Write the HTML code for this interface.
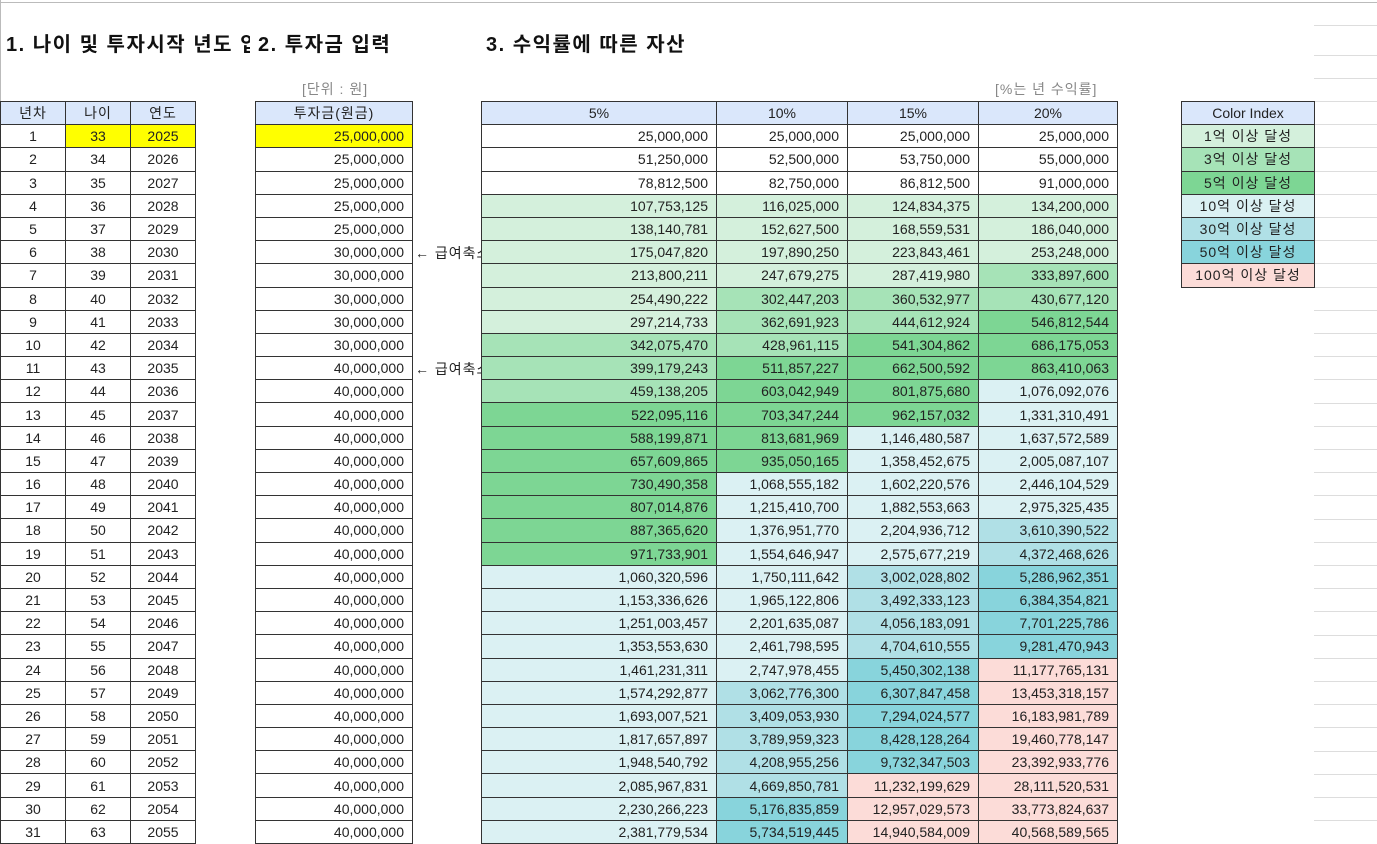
<!DOCTYPE html><html><head><meta charset="utf-8"><style>
body{margin:0;width:1377px;height:836px;overflow:hidden;background:#fff;font-family:"Liberation Sans","Noto Sans CJK KR",sans-serif;position:relative}
.t{position:absolute;font-weight:bold;font-size:20px;letter-spacing:1.5px;top:28px;white-space:nowrap;color:#111}
.g{position:absolute;font-size:14px;letter-spacing:1px;color:#888;top:79px}
table{position:absolute;top:101px;left:0;border-collapse:collapse;table-layout:fixed;font-size:14px;color:#222}
td{border:1px solid #333;height:22.2px;padding:0 8px;text-align:right;white-space:nowrap;overflow:hidden;line-height:20px}
td.s2{border:none}
.c{text-align:center}
.ko{letter-spacing:1px}
.h td{background:#dae7fb;text-align:center}
.h td.s2{background:none}
.y{background:#ffff00}
.a{background:#d4f0dc}.b{background:#a6e3b7}.d{background:#7dd694}.e{background:#dbf1f3}.f{background:#b0e0e6}.k{background:#88d4dc}.m{background:#fcdcd8}
.top{position:absolute;top:2px;left:0;width:1377px;height:1px;background:#bbb}
.lft{position:absolute;top:0;left:0;width:1px;height:101px;background:#bbb}
.rl{position:absolute;left:1314px;width:63px;height:1px;background:#ddd}
.clip{position:absolute;left:412px;top:242px;width:69px;height:140px;overflow:hidden;font-size:14px;color:#222}
</style></head><body>
<div class="top"></div><div class="lft"></div>
<div class="rl" style="top:25px"></div><div class="rl" style="top:55px"></div><div class="rl" style="top:78px"></div>
<div class="rl" style="top:101px"></div><div class="rl" style="top:124px"></div><div class="rl" style="top:147px"></div><div class="rl" style="top:171px"></div><div class="rl" style="top:194px"></div><div class="rl" style="top:217px"></div><div class="rl" style="top:240px"></div><div class="rl" style="top:263px"></div><div class="rl" style="top:287px"></div><div class="rl" style="top:310px"></div><div class="rl" style="top:333px"></div><div class="rl" style="top:356px"></div><div class="rl" style="top:379px"></div><div class="rl" style="top:403px"></div><div class="rl" style="top:426px"></div><div class="rl" style="top:449px"></div><div class="rl" style="top:472px"></div><div class="rl" style="top:495px"></div><div class="rl" style="top:519px"></div><div class="rl" style="top:542px"></div><div class="rl" style="top:565px"></div><div class="rl" style="top:588px"></div><div class="rl" style="top:611px"></div><div class="rl" style="top:635px"></div><div class="rl" style="top:658px"></div><div class="rl" style="top:681px"></div><div class="rl" style="top:704px"></div><div class="rl" style="top:727px"></div><div class="rl" style="top:751px"></div><div class="rl" style="top:774px"></div><div class="rl" style="top:797px"></div><div class="rl" style="top:820px"></div>
<div class="t" style="left:6px;width:244px;overflow:hidden">1. 나이 및 투자시작 년도 입력</div>
<div class="t" style="left:258px">2. 투자금 입력</div>
<div class="t" style="left:486px">3. 수익률에 따른 자산</div>
<div class="g" style="left:302px">[단위 : 원]</div>
<div class="g" style="left:995px">[%는 년 수익률]</div>
<div class="clip"><div style="position:absolute;top:1px;left:3px;white-space:nowrap;letter-spacing:1px">← 급여축소</div><div style="position:absolute;top:117px;left:3px;white-space:nowrap;letter-spacing:1px">← 급여축소</div></div>
<table>
<colgroup><col style="width:65px"><col style="width:65px"><col style="width:65px"><col style="width:60px"><col style="width:157px"><col style="width:69px"><col style="width:235px"><col style="width:131px"><col style="width:131px"><col style="width:139px"><col style="width:64px"><col style="width:133px"></colgroup>
<tr class="h"><td class="ko">년차</td><td class="ko">나이</td><td class="ko">연도</td><td class="s2"></td><td class="ko">투자금(원금)</td><td class="s2"></td><td>5%</td><td>10%</td><td>15%</td><td>20%</td><td class="s2"></td><td>Color Index</td></tr>
<tr><td class="c">1</td><td class="c y">33</td><td class="c y">2025</td><td class="s2"></td><td class="y">25,000,000</td><td class="s2"></td><td>25,000,000</td><td>25,000,000</td><td>25,000,000</td><td>25,000,000</td><td class="s2"></td><td class="c a ko">1억 이상 달성</td></tr>
<tr><td class="c">2</td><td class="c">34</td><td class="c">2026</td><td class="s2"></td><td>25,000,000</td><td class="s2"></td><td>51,250,000</td><td>52,500,000</td><td>53,750,000</td><td>55,000,000</td><td class="s2"></td><td class="c b ko">3억 이상 달성</td></tr>
<tr><td class="c">3</td><td class="c">35</td><td class="c">2027</td><td class="s2"></td><td>25,000,000</td><td class="s2"></td><td>78,812,500</td><td>82,750,000</td><td>86,812,500</td><td>91,000,000</td><td class="s2"></td><td class="c d ko">5억 이상 달성</td></tr>
<tr><td class="c">4</td><td class="c">36</td><td class="c">2028</td><td class="s2"></td><td>25,000,000</td><td class="s2"></td><td class="a">107,753,125</td><td class="a">116,025,000</td><td class="a">124,834,375</td><td class="a">134,200,000</td><td class="s2"></td><td class="c e ko">10억 이상 달성</td></tr>
<tr><td class="c">5</td><td class="c">37</td><td class="c">2029</td><td class="s2"></td><td>25,000,000</td><td class="s2"></td><td class="a">138,140,781</td><td class="a">152,627,500</td><td class="a">168,559,531</td><td class="a">186,040,000</td><td class="s2"></td><td class="c f ko">30억 이상 달성</td></tr>
<tr><td class="c">6</td><td class="c">38</td><td class="c">2030</td><td class="s2"></td><td>30,000,000</td><td class="s2"></td><td class="a">175,047,820</td><td class="a">197,890,250</td><td class="a">223,843,461</td><td class="a">253,248,000</td><td class="s2"></td><td class="c k ko">50억 이상 달성</td></tr>
<tr><td class="c">7</td><td class="c">39</td><td class="c">2031</td><td class="s2"></td><td>30,000,000</td><td class="s2"></td><td class="a">213,800,211</td><td class="a">247,679,275</td><td class="a">287,419,980</td><td class="b">333,897,600</td><td class="s2"></td><td class="c m ko">100억 이상 달성</td></tr>
<tr><td class="c">8</td><td class="c">40</td><td class="c">2032</td><td class="s2"></td><td>30,000,000</td><td class="s2"></td><td class="a">254,490,222</td><td class="b">302,447,203</td><td class="b">360,532,977</td><td class="b">430,677,120</td></tr>
<tr><td class="c">9</td><td class="c">41</td><td class="c">2033</td><td class="s2"></td><td>30,000,000</td><td class="s2"></td><td class="a">297,214,733</td><td class="b">362,691,923</td><td class="b">444,612,924</td><td class="d">546,812,544</td></tr>
<tr><td class="c">10</td><td class="c">42</td><td class="c">2034</td><td class="s2"></td><td>30,000,000</td><td class="s2"></td><td class="b">342,075,470</td><td class="b">428,961,115</td><td class="d">541,304,862</td><td class="d">686,175,053</td></tr>
<tr><td class="c">11</td><td class="c">43</td><td class="c">2035</td><td class="s2"></td><td>40,000,000</td><td class="s2"></td><td class="b">399,179,243</td><td class="d">511,857,227</td><td class="d">662,500,592</td><td class="d">863,410,063</td></tr>
<tr><td class="c">12</td><td class="c">44</td><td class="c">2036</td><td class="s2"></td><td>40,000,000</td><td class="s2"></td><td class="b">459,138,205</td><td class="d">603,042,949</td><td class="d">801,875,680</td><td class="e">1,076,092,076</td></tr>
<tr><td class="c">13</td><td class="c">45</td><td class="c">2037</td><td class="s2"></td><td>40,000,000</td><td class="s2"></td><td class="d">522,095,116</td><td class="d">703,347,244</td><td class="d">962,157,032</td><td class="e">1,331,310,491</td></tr>
<tr><td class="c">14</td><td class="c">46</td><td class="c">2038</td><td class="s2"></td><td>40,000,000</td><td class="s2"></td><td class="d">588,199,871</td><td class="d">813,681,969</td><td class="e">1,146,480,587</td><td class="e">1,637,572,589</td></tr>
<tr><td class="c">15</td><td class="c">47</td><td class="c">2039</td><td class="s2"></td><td>40,000,000</td><td class="s2"></td><td class="d">657,609,865</td><td class="d">935,050,165</td><td class="e">1,358,452,675</td><td class="e">2,005,087,107</td></tr>
<tr><td class="c">16</td><td class="c">48</td><td class="c">2040</td><td class="s2"></td><td>40,000,000</td><td class="s2"></td><td class="d">730,490,358</td><td class="e">1,068,555,182</td><td class="e">1,602,220,576</td><td class="e">2,446,104,529</td></tr>
<tr><td class="c">17</td><td class="c">49</td><td class="c">2041</td><td class="s2"></td><td>40,000,000</td><td class="s2"></td><td class="d">807,014,876</td><td class="e">1,215,410,700</td><td class="e">1,882,553,663</td><td class="e">2,975,325,435</td></tr>
<tr><td class="c">18</td><td class="c">50</td><td class="c">2042</td><td class="s2"></td><td>40,000,000</td><td class="s2"></td><td class="d">887,365,620</td><td class="e">1,376,951,770</td><td class="e">2,204,936,712</td><td class="f">3,610,390,522</td></tr>
<tr><td class="c">19</td><td class="c">51</td><td class="c">2043</td><td class="s2"></td><td>40,000,000</td><td class="s2"></td><td class="d">971,733,901</td><td class="e">1,554,646,947</td><td class="e">2,575,677,219</td><td class="f">4,372,468,626</td></tr>
<tr><td class="c">20</td><td class="c">52</td><td class="c">2044</td><td class="s2"></td><td>40,000,000</td><td class="s2"></td><td class="e">1,060,320,596</td><td class="e">1,750,111,642</td><td class="f">3,002,028,802</td><td class="k">5,286,962,351</td></tr>
<tr><td class="c">21</td><td class="c">53</td><td class="c">2045</td><td class="s2"></td><td>40,000,000</td><td class="s2"></td><td class="e">1,153,336,626</td><td class="e">1,965,122,806</td><td class="f">3,492,333,123</td><td class="k">6,384,354,821</td></tr>
<tr><td class="c">22</td><td class="c">54</td><td class="c">2046</td><td class="s2"></td><td>40,000,000</td><td class="s2"></td><td class="e">1,251,003,457</td><td class="e">2,201,635,087</td><td class="f">4,056,183,091</td><td class="k">7,701,225,786</td></tr>
<tr><td class="c">23</td><td class="c">55</td><td class="c">2047</td><td class="s2"></td><td>40,000,000</td><td class="s2"></td><td class="e">1,353,553,630</td><td class="e">2,461,798,595</td><td class="f">4,704,610,555</td><td class="k">9,281,470,943</td></tr>
<tr><td class="c">24</td><td class="c">56</td><td class="c">2048</td><td class="s2"></td><td>40,000,000</td><td class="s2"></td><td class="e">1,461,231,311</td><td class="e">2,747,978,455</td><td class="k">5,450,302,138</td><td class="m">11,177,765,131</td></tr>
<tr><td class="c">25</td><td class="c">57</td><td class="c">2049</td><td class="s2"></td><td>40,000,000</td><td class="s2"></td><td class="e">1,574,292,877</td><td class="f">3,062,776,300</td><td class="k">6,307,847,458</td><td class="m">13,453,318,157</td></tr>
<tr><td class="c">26</td><td class="c">58</td><td class="c">2050</td><td class="s2"></td><td>40,000,000</td><td class="s2"></td><td class="e">1,693,007,521</td><td class="f">3,409,053,930</td><td class="k">7,294,024,577</td><td class="m">16,183,981,789</td></tr>
<tr><td class="c">27</td><td class="c">59</td><td class="c">2051</td><td class="s2"></td><td>40,000,000</td><td class="s2"></td><td class="e">1,817,657,897</td><td class="f">3,789,959,323</td><td class="k">8,428,128,264</td><td class="m">19,460,778,147</td></tr>
<tr><td class="c">28</td><td class="c">60</td><td class="c">2052</td><td class="s2"></td><td>40,000,000</td><td class="s2"></td><td class="e">1,948,540,792</td><td class="f">4,208,955,256</td><td class="k">9,732,347,503</td><td class="m">23,392,933,776</td></tr>
<tr><td class="c">29</td><td class="c">61</td><td class="c">2053</td><td class="s2"></td><td>40,000,000</td><td class="s2"></td><td class="e">2,085,967,831</td><td class="f">4,669,850,781</td><td class="m">11,232,199,629</td><td class="m">28,111,520,531</td></tr>
<tr><td class="c">30</td><td class="c">62</td><td class="c">2054</td><td class="s2"></td><td>40,000,000</td><td class="s2"></td><td class="e">2,230,266,223</td><td class="k">5,176,835,859</td><td class="m">12,957,029,573</td><td class="m">33,773,824,637</td></tr>
<tr><td class="c">31</td><td class="c">63</td><td class="c">2055</td><td class="s2"></td><td>40,000,000</td><td class="s2"></td><td class="e">2,381,779,534</td><td class="k">5,734,519,445</td><td class="m">14,940,584,009</td><td class="m">40,568,589,565</td></tr>
</table>
</body></html>
